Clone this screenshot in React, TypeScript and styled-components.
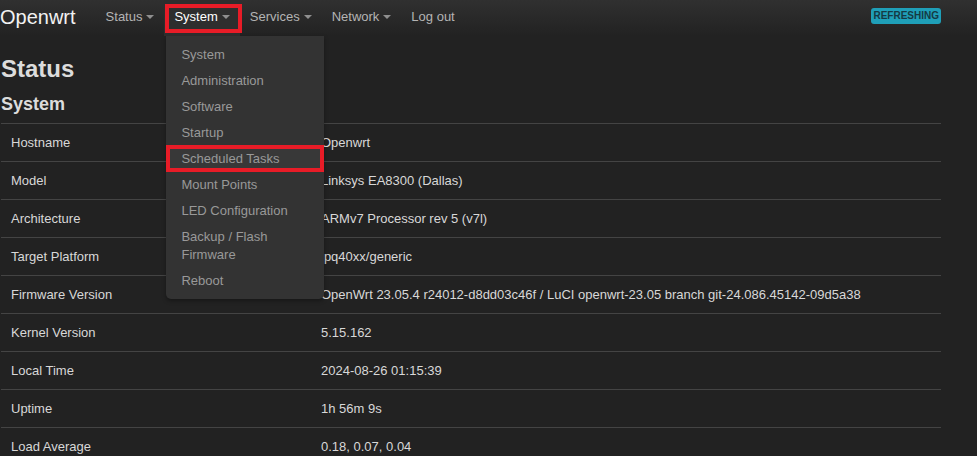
import React from "react";
import styled, { createGlobalStyle } from "styled-components";

const GlobalStyle = createGlobalStyle`
  html, body { margin: 0; padding: 0; background: #222; }
  body { font-family: "Liberation Sans", Arial, sans-serif; color: #ddd; overflow: hidden; }
  * { box-sizing: border-box; }
`;

const Header = styled.header`
  height: 36px;
  background: linear-gradient(to bottom, #303030, #222);
`;

const HeaderInner = styled.div`
  width: 941px;
  height: 100%;
  padding-left: 0;
  display: flex;
  align-items: center;
`;

const Brand = styled.a`
  font-size: 20px;
  color: #f2f2f2;
  margin-right: 20px;
  line-height: 36px;
  padding-bottom: 3px;
`;

const Nav = styled.nav`
  display: flex;
  height: 100%;
  flex: 1;
`;

const NavItem = styled.div<{ $active?: boolean }>`
  position: relative;
  display: flex;
  align-items: center;
  height: 100%;
  padding: 0 10px 4px;
  font-size: 13px;
  color: ${(p) => (p.$active ? "#fff" : "#b4b4b4")};
  background: ${(p) => (p.$active ? "#2e2e2e" : "transparent")};
  ${(p) =>
    p.$active &&
    `
    &::after {
      content: "";
      position: absolute;
      top: 4px;
      bottom: 3px;
      left: 1px;
      right: -2px;
      border: 4px solid #e81c27;
      pointer-events: none;
    }
  `}
`;

const Caret = styled.span`
  display: inline-block;
  width: 0;
  height: 0;
  margin-left: 4px;
  margin-top: 1px;
  border-top: 4px solid #8f8f8f;
  border-left: 4px solid transparent;
  border-right: 4px solid transparent;
`;

const Dropdown = styled.ul`
  position: absolute;
  top: 36px;
  left: 2px;
  width: 158px;
  margin: 0;
  padding: 6px 0 5px;
  list-style: none;
  background: #333;
  border-radius: 0 0 5px 5px;
  box-shadow: 0 2px 4px rgba(0, 0, 0, 0.35);
  z-index: 10;
`;

const DropItem = styled.li<{ $active?: boolean }>`
  position: relative;
  padding: 4px 15px;
  line-height: 18px;
  font-size: 13px;
  color: #999;
  background: ${(p) => (p.$active ? "#383838" : "transparent")};
  ${(p) =>
    p.$active &&
    `
    &::after {
      content: "";
      position: absolute;
      top: -1px;
      bottom: 0;
      left: 0;
      right: 0;
      border: 4px solid #e81c27;
      pointer-events: none;
    }
  `}
`;

const Badge = styled.span`
  display: inline-block;
  background: #1f9fb8;
  color: #153a44;
  font-size: 10px;
  font-weight: bold;
  line-height: 16px;
  height: 16px;
  padding: 0 2px;
  border-radius: 3px;
  margin-bottom: 5px;
`;

const Main = styled.main`
  width: 941px;
  padding-left: 1px;
`;

const H2 = styled.h2`
  margin: 20px 0 0;
  font-size: 24px;
  line-height: 26px;
  font-weight: bold;
  color: #dcdcdc;
`;

const H3 = styled.h3`
  margin: 12px 0 0;
  font-size: 18px;
  line-height: 20px;
  font-weight: bold;
  color: #dcdcdc;
`;

const Table = styled.div`
  margin-top: 9px;
  width: 940px;
`;

const Row = styled.div`
  display: grid;
  grid-template-columns: 310px 1fr;
  border-top: 1px solid #444;
  height: 38px;
  align-items: center;
  font-size: 13px;
  color: #d8d8d8;
`;

const Cell = styled.div`
  padding: 0 10px;
  white-space: nowrap;
`;

const menuItems = [
  "System",
  "Administration",
  "Software",
  "Startup",
  "Scheduled Tasks",
  "Mount Points",
  "LED Configuration",
  "Backup / Flash Firmware",
  "Reboot",
];

const rows: [string, string][] = [
  ["Hostname", "Openwrt"],
  ["Model", "Linksys EA8300 (Dallas)"],
  ["Architecture", "ARMv7 Processor rev 5 (v7l)"],
  ["Target Platform", "ipq40xx/generic"],
  [
    "Firmware Version",
    "OpenWrt 23.05.4 r24012-d8dd03c46f / LuCI openwrt-23.05 branch git-24.086.45142-09d5a38",
  ],
  ["Kernel Version", "5.15.162"],
  ["Local Time", "2024-08-26 01:15:39"],
  ["Uptime", "1h 56m 9s"],
  ["Load Average", "0.18, 0.07, 0.04"],
];

export default function App() {
  return (
    <>
      <GlobalStyle />
      <Header>
        <HeaderInner>
          <Brand>Openwrt</Brand>
          <Nav>
            <NavItem>
              Status
              <Caret />
            </NavItem>
            <NavItem $active>
              System
              <Caret />
              <Dropdown>
                {menuItems.map((m) => (
                  <DropItem key={m} $active={m === "Scheduled Tasks"}>
                    {m}
                  </DropItem>
                ))}
              </Dropdown>
            </NavItem>
            <NavItem>
              Services
              <Caret />
            </NavItem>
            <NavItem>
              Network
              <Caret />
            </NavItem>
            <NavItem>Log out</NavItem>
          </Nav>
          <Badge>REFRESHING</Badge>
        </HeaderInner>
      </Header>
      <Main>
        <H2>Status</H2>
        <H3>System</H3>
        <Table>
          {rows.map(([k, v]) => (
            <Row key={k}>
              <Cell>{k}</Cell>
              <Cell>{v}</Cell>
            </Row>
          ))}
        </Table>
      </Main>
    </>
  );
}
